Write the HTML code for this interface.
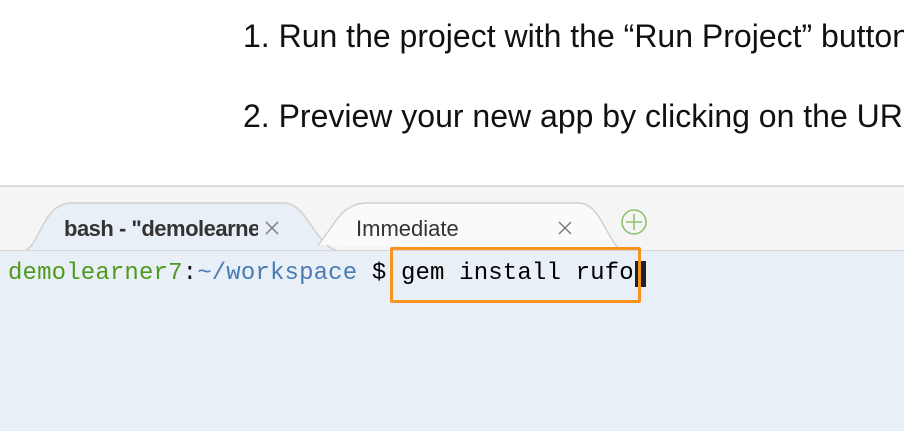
<!DOCTYPE html>
<html><head><style>
html,body{margin:0;padding:0;width:904px;height:430px;overflow:hidden;background:#fff;font-family:"Liberation Sans",sans-serif}
.t{position:absolute;left:243px;font-size:32px;color:#111;white-space:nowrap;letter-spacing:0px}
.bar{position:absolute;left:0;top:185px;width:904px;height:65px;background:#f5f5f5;border-top:2px solid #dcdcdc}
.term{position:absolute;left:0;top:250px;width:904px;height:180px;background:#e9eff7;border-top:1px solid #d6d6d6}
.mono{position:absolute;left:8px;top:260px;font-family:"Liberation Mono",monospace;font-size:24px;white-space:nowrap;letter-spacing:0.15px}
.tab{position:absolute;font-size:22px;color:#333;white-space:nowrap}
</style></head><body>
<div class="t" style="top:18px">1. Run the project with the “Run Project” button</div>
<div class="t" style="top:98px">2. Preview your new app by clicking on the URL</div>
<div class="bar"></div>
<svg style="position:absolute;left:0;top:195px" width="904" height="60">
<path d="M0 57 L20 57 C40 57 40 10 70 8 L285 8 C310 10 315 57 345 57" fill="#e9eff7" stroke="#d0d0d0" stroke-width="1.5"/>
<path d="M318 50 C335 30 340 10 365 8 L580 8 C600 10 605 40 620 55" fill="#fafafa" stroke="#d0d0d0" stroke-width="1.5"/>
<rect x="0" y="55" width="904" height="5" fill="#e9eff7"/>
<circle cx="634" cy="27" r="12" fill="none" stroke="#8cc46e" stroke-width="1.6"/>
<path d="M634 19v16M626 27h16" stroke="#8cc46e" stroke-width="1.6"/>
<path d="M266 27l12 12M278 27l-12 12M559 27l12 12M571 27l-12 12" stroke="#777" stroke-width="1.4"/>
</svg>
<div class="tab" style="left:64px;top:216px;font-weight:bold;width:194px;overflow:hidden;letter-spacing:-0.5px">bash - "demolearner7</div>
<div class="tab" style="left:356px;top:216px">Immediate</div>
<div class="term"></div>
<div class="mono"><span style="color:#4f9a1e">demolearner7</span><span style="color:#111">:</span><span style="color:#4a7bb5">~/workspace</span><span style="color:#000"> $ gem install rufo</span></div>
<div style="position:absolute;left:635px;top:261px;width:11px;height:26px;background:#222"></div>
<div style="position:absolute;left:390px;top:247px;width:245px;height:50px;border:3px solid #f7931e;border-radius:2px"></div>
</body></html>
